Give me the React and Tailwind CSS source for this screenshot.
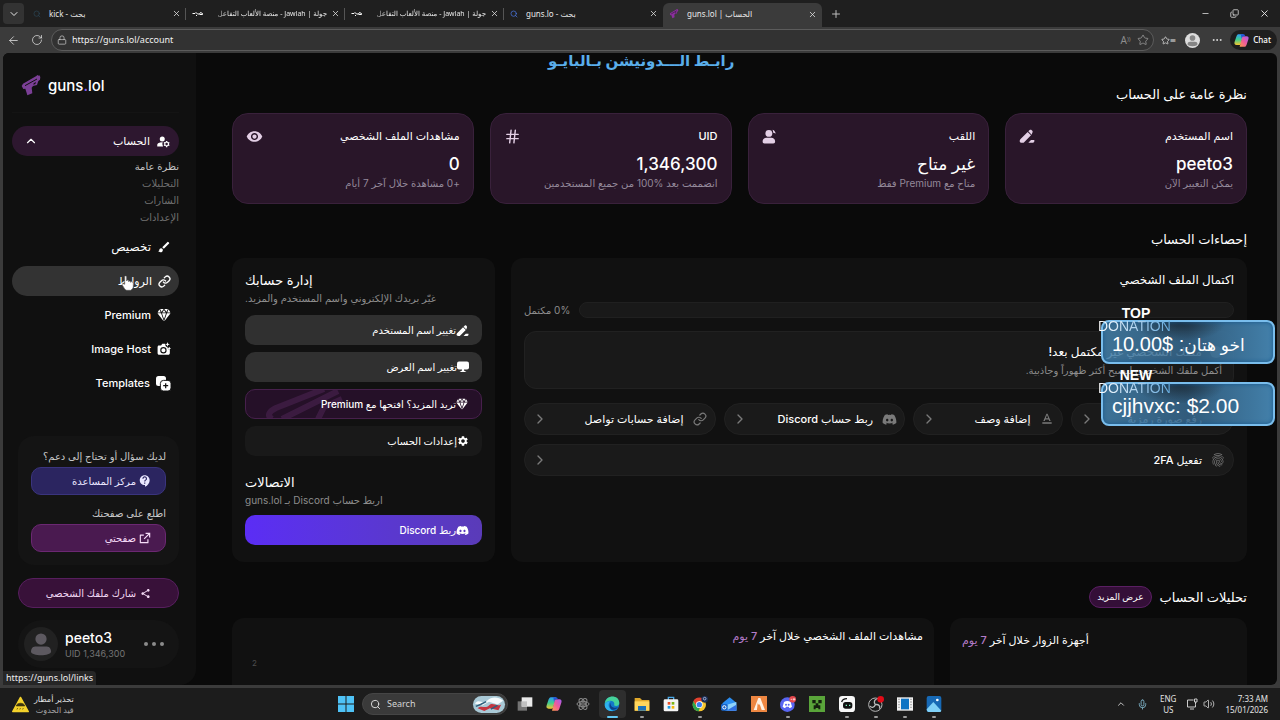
import {
  ArrowLeft,
  ChevronDown,
  ChevronRight,
  ChevronUp,
  Copy,
  Ellipsis,
  Hash,
  Link,
  Lock,
  Mic,
  Minus,
  Plus,
  RotateCw,
  Search,
  Star,
  Volume2,
  X
} from "lucide-react";
import {
  MdBrush,
  MdContactSupport,
  MdFingerprint,
  MdManageAccounts,
  MdSettings,
  MdShare,
  MdTextFormat,
  MdVisibility
} from "react-icons/md";
import { IoDiamond } from "react-icons/io5";
import { RiExternalLinkLine } from "react-icons/ri";
import { FaDiscord } from "react-icons/fa";

const pageFont = "font-['Inter','DejaVu_Sans',sans-serif]";
const systemFont = "font-['Noto_Sans','DejaVu_Sans',sans-serif]";

function GunLogo({ className }) {
  return (
    <svg viewBox="0 0 60 66" className={className} fill="currentColor" aria-hidden="true">
      <path d="M2 33 6 26 46 3l3-3 4 2 2-1 3 5-1 8-5 4-4 12-12 3-4 5 2 17-15 6-6-20-6 1z" />
      <path d="M12 32 48 12" stroke="#101010" strokeWidth="3" />
      <path d="m38 25 7-4-2 6-6 2z" fill="#101010" />
    </svg>
  );
}

function JawlahIcon() {
  return (
    <svg viewBox="0 0 22 10" className="h-[5px] w-[11px] shrink-0" fill="none" stroke="#ffffff" strokeWidth="2" aria-hidden="true">
      <path d="M1 5h5l2-2 3 3h4l2-3 4 2v2h-6M8 9h2" />
    </svg>
  );
}

function PencilLine({ size = 13 }) {
  return (
    <svg viewBox="0 0 24 24" width={size} height={size} fill="currentColor" aria-hidden="true">
      <path d="M2 17 13 6l5 5L7 22H4c-2 0-3-1-3-3zM14 5l2-2c2-2 6 2 4 4l-1 3zM14 22l4-4h5v2c0 1-1 2-2 2z" />
    </svg>
  );
}

function CameraSparkle({ size = 14 }) {
  return (
    <svg viewBox="0 0 24 24" width={size} height={size} fill="currentColor" aria-hidden="true">
      <path d="M3 6h4l2-3h5c0 3 1 5 4 6 0 3 2 4 4 4v6c0 2-1 3-3 3H4c-2 0-3-1-3-3V9c0-2 1-3 2-3z" />
      <circle cx="11" cy="14" r="4.500" fill="none" stroke="#101010" strokeWidth="2" />
      <path d="m18 0 1 3 3 1-3 1-1 3-1-3-3-1 3-1zM21 8l1 2 2 1-2 1-1 2-1-2-2-1 2-1z" />
    </svg>
  );
}

function TemplatesIcon({ size = 15 }) {
  return (
    <svg viewBox="0 0 24 24" width={size} height={size} aria-hidden="true">
      <rect x="0" y="0" width="16" height="16" rx="4" fill="currentColor" />
      <rect x="7" y="7" width="17" height="17" rx="5" fill="currentColor" stroke="#101010" strokeWidth="1.500" />
      <path d="M15.500 11.500v8M11.500 15.500h8" stroke="#101010" strokeWidth="2" />
    </svg>
  );
}

function AliasIcon({ size = 16 }) {
  return (
    <svg viewBox="0 0 24 24" width={size} height={size} fill="currentColor" aria-hidden="true">
      <circle cx="11" cy="7" r="5.500" />
      <path d="M1 20c0-4 3-6 6-6h8c3 0 6 2 6 6 0 2-1 3-3 3H4c-2 0-3-1-3-3zM17 1c3 1 4 3 5 6l-4-1z" />
    </svg>
  );
}

function MonitorIcon({ size = 12 }) {
  return (
    <svg viewBox="0 0 24 24" width={size} height={size} fill="currentColor" aria-hidden="true">
      <rect x="0" y="1" width="24" height="16" rx="4" />
      <path d="M10 16h4v3l5 3H5l5-3z" />
    </svg>
  );
}

function Avatar({ className }) {
  return (
    <svg viewBox="0 0 24 24" className={className} fill="currentColor" aria-hidden="true">
      <circle cx="12" cy="8" r="4.500" />
      <path d="M4 18c0-3 2-4 4-4h8c2 0 4 1 4 4 0 2-4 3-8 3s-8-1-8-3z" />
    </svg>
  );
}

function CopilotIcon({ size = 16 }) {
  return (
    <svg viewBox="0 0 24 24" width={size} height={size} className="shrink-0" aria-hidden="true">
      <defs>
        <linearGradient id="copilotA" x1="0" y1="0" x2="0" y2="1">
          <stop offset="0" stopColor="#2f9df4" />
          <stop offset="0.500" stopColor="#3fce8e" />
          <stop offset="1" stopColor="#f3c530" />
        </linearGradient>
        <linearGradient id="copilotB" x1="1" y1="0" x2="0" y2="1">
          <stop offset="0" stopColor="#a05cf5" />
          <stop offset="0.500" stopColor="#ee5a9c" />
          <stop offset="1" stopColor="#ff9a4a" />
        </linearGradient>
      </defs>
      <path d="M7 2h8l-4 15c0 1-1 2-3 2H4c-3 0-4-2-3-5l3-9c1-2 2-3 3-3z" fill="url(#copilotA)" />
      <path d="M17 22H9l4-15c0-1 1-2 3-2h4c3 0 4 2 3 5l-3 9c-1 2-2 3-3 3z" fill="url(#copilotB)" />
      <path d="M11 2h4c2 0 2 1 3 3h-3c-2 0-2 2-3 4z" fill="#2456d8" />
    </svg>
  );
}

const tabs = [
  { title: "kick - بحث", icon: "search", dim: true },
  { title: "جولة | Jawlah - منصة الألعاب التفاعل", icon: "jawlah", rtl: true },
  { title: "جولة | Jawlah - منصة الألعاب التفاعل", icon: "jawlah", rtl: true },
  { title: "guns.lo - بحث", icon: "search" },
  { title: "guns.lol | الحساب", icon: "gun", active: true }
];

function TabIcon({ tab }) {
  if (tab.icon === "gun") return <GunLogo className="h-[10px] w-[10px] shrink-0 text-[#8b2f9e]" />;
  if (tab.icon === "jawlah") return <JawlahIcon />;
  return <Search size={8} className={tab.dim ? "shrink-0 text-[#2b4757]" : "shrink-0 text-[#4d7bf0]"} />;
}

function TabStrip() {
  return (
    <div className="flex h-[27px] shrink-0 items-center bg-[#1f1f1f] pl-[3px] text-[#e8e8e8]">
      <button className="grid h-[21px] w-[21px] shrink-0 place-items-center rounded bg-[#333333]" aria-label="Tab actions">
        <ChevronDown size={12} />
      </button>
      <div className="flex h-full min-w-0 items-end pl-[3px]" role="tablist">
        {tabs.map((tab, i) => (
          <div
            key={i}
            role="tab"
            aria-selected={!!tab.active}
            className={`flex w-[159px] items-center pr-[5px] pl-[6px] ${
              tab.active ? "h-6 rounded-t-md bg-[#3b3b3b] pb-[2px]" : "h-[27px]"
            }`}
          >
            <TabIcon tab={tab} />
            <span
              dir={tab.rtl ? "rtl" : "ltr"}
              className={`min-w-0 flex-1 leading-4 whitespace-nowrap ${
                tab.rtl
                  ? "mr-1 ml-[5px] text-[7px] [mask-image:linear-gradient(to_right,transparent,black_20px)]"
                  : "mx-2 text-[8px]"
              }`}
            >
              {tab.title}
            </span>
            <button aria-label="Close tab">
              <X size={9} />
            </button>
            {i < 3 && <span className="-mr-[5px] ml-1 h-3 w-px bg-[#555555]" />}
          </div>
        ))}
      </div>
      <button className="ml-2 text-[#bdbdbd]" aria-label="New tab">
        <Plus size={12} />
      </button>
      <div className="ml-auto flex items-center gap-[20px] pr-[10px]">
        <button aria-label="Minimize"><Minus size={9} /></button>
        <button aria-label="Restore"><Copy size={9} className="-scale-x-100 rotate-180" /></button>
        <button aria-label="Close"><X size={11} /></button>
      </div>
    </div>
  );
}

function Toolbar() {
  return (
    <div className="flex h-[26px] shrink-0 items-center bg-[#3b3b3b] pr-[3px] pl-[7px] text-[#dddddd]">
      <button aria-label="Back"><ArrowLeft size={13} strokeWidth={1.5} /></button>
      <button aria-label="Refresh" className="ml-[11px]"><RotateCw size={12} strokeWidth={1.5} /></button>
      <div className="ml-2 flex h-[22px] min-w-0 flex-1 items-center gap-[5px] rounded-full border border-[#5c5c5c] bg-[#323232] pr-1 pl-[5px]">
        <Lock size={10} strokeWidth={1.5} />
        <input
          aria-label="Address"
          defaultValue="https://guns.lol/account"
          className="min-w-0 flex-1 bg-transparent text-[9px] leading-4 text-[#f0f0f0] outline-none"
        />
        <span className="text-[10px] text-[#8d8d8d]">A<sup className="text-[6px]">))</sup></span>
        <Star size={12} strokeWidth={1.5} className="ml-px text-[#a0a0a0]" />
      </div>
      <button aria-label="Favorites" className="ml-[7px] flex items-center">
        <Star size={9} />
        <span className="text-[8px] leading-3">≡</span>
      </button>
      <button aria-label="Profile" className="ml-[9px] grid h-[15px] w-[15px] place-items-center overflow-hidden rounded-full bg-[#dcdcdc] text-[#858585]">
        <Avatar className="h-[15px] w-[15px]" />
      </button>
      <button aria-label="Settings and more" className="ml-[11px]"><Ellipsis size={12} /></button>
      <button className="ml-[7px] flex h-[20px] items-center gap-1 rounded-full bg-[#1e1e1e] pr-[6px] pl-1 text-[8px] font-medium text-white">
        <CopilotIcon size={15} />
        Chat
      </button>
    </div>
  );
}

const subItems = ["نظرة عامة", "التحليلات", "الشارات", "الإعدادات"];

const navItems = [
  { label: "تخصيص", icon: <MdBrush size={14} />, size: "text-[12px]" },
  { label: "الروابط", icon: <Link size={13} strokeWidth={2.5} />, size: "text-[11px]", hover: true },
  { label: "Premium", icon: <IoDiamond size={14} />, size: "text-[11px]" },
  { label: "Image Host", icon: <CameraSparkle size={14} />, size: "text-[11px]" },
  { label: "Templates", icon: <TemplatesIcon size={15} />, size: "text-[11px]" }
];

function Sidebar() {
  return (
    <aside dir="rtl" className="flex w-[193px] shrink-0 flex-col rounded-br-2xl bg-[#101010] pr-[17px] pl-[9px]">
      <div dir="ltr" className="flex h-[60px] items-center gap-[7px] border-b border-[#141414] pt-[6px] pl-[9px]">
        <GunLogo className="h-[22px] w-5 text-[#7b3f96]" />
        <span className="text-[15px] leading-6 font-medium text-white">guns<span className="text-[#8b5cf6]">.</span>lol</span>
      </div>
      <button className="mt-[13px] flex h-[30px] shrink-0 items-center gap-[6px] rounded-full bg-[#2d172f] px-2 text-white">
        <MdManageAccounts size={15} />
        <span className="text-[11px] font-medium">الحساب</span>
        <ChevronUp size={14} className="mr-auto ml-1" />
      </button>
      <ul className="mt-[2px]">
        {subItems.map((item, i) => (
          <li key={item} className={`h-[17px] text-[10px] leading-[17px] ${i === 0 ? "text-[#c4c4c4]" : "text-[#6f6f6f]"}`}>
            <a href="#">{item}</a>
          </li>
        ))}
      </ul>
      <nav className="mt-[6px] flex flex-col gap-1">
        {navItems.map((item) => (
          <a
            key={item.label}
            href="#"
            className={`flex h-[30px] items-center gap-[6px] rounded-full px-2 font-medium text-white ${item.size} ${
              item.hover ? "bg-[#333333]" : ""
            }`}
          >
            {item.icon}
            {item.label}
          </a>
        ))}
      </nav>

      <div className="mt-[38px] ml-[6px] rounded-2xl bg-[#141414] px-[13px] pt-3 pb-[13px]">
        <p className="text-[10px] leading-4 text-[#c9c9c9]">لديك سؤال أو تحتاج إلى دعم؟</p>
        <button className="mt-[3px] flex h-7 w-full items-center gap-[2px] rounded-[10px] border border-[#3a347e] bg-[#2b2560] px-[13px] text-[10px] text-[#e9e6ff]">
          <MdContactSupport size={14} />
          مركز المساعدة
        </button>
        <p className="mt-[10px] text-[10px] leading-4 text-[#c9c9c9]">اطلع على صفحتك</p>
        <button className="mt-[3px] flex h-7 w-full items-center gap-[2px] rounded-[10px] border border-[#6b2872] bg-[#4a1a50] px-[13px] text-[10px] text-[#f6dcf8]">
          <RiExternalLinkLine size={14} />
          صفحتي
        </button>
      </div>
      <button className="mt-[13px] ml-[6px] flex h-[30px] shrink-0 items-center justify-center gap-1 rounded-full border border-[#571f5e] bg-[#381139] text-[10px] text-[#f1d8f3]">
        <MdShare size={11} />
        شارك ملفك الشخصي
      </button>
      <div dir="ltr" className="mt-3 ml-[6px] flex h-12 shrink-0 items-center gap-[7px] rounded-full bg-[#141414] pr-[15px] pl-[6px]">
        <div className="grid h-[34px] w-[34px] place-items-center rounded-full bg-[#212121] text-[#5d5960]">
          <Avatar className="h-[30px] w-[30px]" />
        </div>
        <div className="flex-1 pt-1">
          <div className="text-[14px] leading-4 font-medium text-white">peeto3</div>
          <div className="text-[9px] leading-4 text-[#757575]">UID 1,346,300</div>
        </div>
        <button aria-label="More" className="flex gap-1">
          <span className="h-1 w-1 rounded-full bg-[#8b8b8b]" />
          <span className="h-1 w-1 rounded-full bg-[#8b8b8b]" />
          <span className="h-1 w-1 rounded-full bg-[#8b8b8b]" />
        </button>
      </div>
    </aside>
  );
}

const stats = [
  { title: "اسم المستخدم", value: "peeto3", note: "يمكن التغيير الآن", icon: <PencilLine size={16} /> },
  { title: "اللقب", value: "غير متاح", note: "متاح مع Premium فقط", icon: <AliasIcon size={15} /> },
  { title: "UID", value: "1,346,300", note: "انضممت بعد %100 من جميع المستخدمين", icon: <Hash size={17} strokeWidth={2} /> },
  { title: "مشاهدات الملف الشخصي", value: "0", note: "+0 مشاهدة خلال آخر 7 أيام", icon: <MdVisibility size={17} /> }
];

function StatCard({ stat }) {
  return (
    <div className="rounded-2xl border border-[#39213b] bg-[#291629] px-[13px] py-3">
      <div className="flex h-5 items-center justify-between">
        <h3 className="text-[11px] font-medium text-white">{stat.title}</h3>
        <span className="text-[#e3cfe5]">{stat.icon}</span>
      </div>
      <p className="mt-[6px] text-[17px] leading-6 font-medium text-white">{stat.value}</p>
      <p className="mb-px text-[10px] leading-[14px] text-[#94899a]">{stat.note}</p>
    </div>
  );
}

const steps = [
  { label: "رفع صورة رمزية", icon: null, width: "basis-[163px]" },
  { label: "إضافة وصف", icon: <MdTextFormat size={16} />, width: "basis-[149px]" },
  { label: "ربط حساب Discord", icon: <FaDiscord size={15} />, width: "basis-[181px]" },
  { label: "إضافة حسابات تواصل", icon: <Link size={14} />, width: "basis-[191px]" }
];

function Step({ label, icon, className }) {
  return (
    <button className={`flex h-8 items-center gap-2 rounded-full border border-[#212121] bg-[#1a1a1a] px-[7px] text-[#7a7a7a] ${className}`}>
      <span className="grid w-4 place-items-center">{icon}</span>
      <span className="text-[11px] font-medium whitespace-nowrap text-white">{label}</span>
      <ChevronRight size={16} className="mr-auto" />
    </button>
  );
}

function Completion() {
  return (
    <section className="min-w-0 flex-1 rounded-xl bg-[#111111] px-[13px] pt-3">
      <h3 className="text-[12px] leading-5 font-medium text-white">اكتمال الملف الشخصي</h3>
      <div className="mt-3 flex items-center gap-[9px]">
        <div className="h-4 flex-1 rounded-full border border-[#202020] bg-[#191919]" />
        <span className="text-[10px] leading-4 whitespace-nowrap text-[#8d8d8d]">0% مكتمل</span>
      </div>
      <div className="mt-[13px] h-[58px] rounded-xl border border-[#212121] bg-[#191919] px-[11px] pt-[11px]">
        <h4 className="flex items-center gap-2 text-[12px] leading-[18px] font-medium text-white">
          <span className="h-3 w-3 rounded-full bg-[#777777]" />
          ملفك الشخصي غير مكتمل بعد!
        </h4>
        <p className="text-[10px] leading-[18px] text-[#8d8d8d]">أكمل ملفك الشخصي ليصبح أكثر ظهوراً وجاذبية.</p>
      </div>
      <div className="mt-[14px] flex gap-2">
        {steps.map((step) => (
          <Step key={step.label} label={step.label} icon={step.icon} className={`grow ${step.width}`} />
        ))}
      </div>
      <Step label="تفعيل 2FA" icon={<MdFingerprint size={16} />} className="mt-[9px] w-full" />
    </section>
  );
}

const actionBase = "relative flex h-[30px] w-full items-center overflow-hidden rounded-[10px] px-[13px] text-[10px] font-medium text-white";

function Management() {
  return (
    <section className="w-[263px] shrink-0 rounded-xl bg-[#111111] px-[13px] pt-3 pb-[17px]">
      <h3 dir="ltr" className="text-[13px] leading-5 font-medium text-white">إدارة حسابك</h3>
      <p className="text-left text-[10px] leading-4 text-[#8d8d8d]">غيّر بريدك الإلكتروني واسم المستخدم والمزيد.</p>
      <div className="mt-[9px] flex flex-col gap-[7px]">
        <button className={`${actionBase} bg-[#303030]`}><PencilLine size={13} />تغيير اسم المستخدم</button>
        <button className={`${actionBase} bg-[#303030]`}><MonitorIcon size={12} />تغيير اسم العرض</button>
        <button className={`${actionBase} border border-[#47204c] bg-[#251028]`}>
          <svg viewBox="0 0 90 30" className="absolute left-5 h-[30px] w-[90px] text-[#3b1b40]" fill="none" stroke="currentColor" aria-hidden="true">
            <path d="M6 30c-6-4-2-8 4-11L58 0M16 30 72 2M52 30l6-12 18-8" strokeWidth="6" />
          </svg>
          <IoDiamond size={12} className="relative" />
          <span className="relative">تريد المزيد؟ افتحها مع Premium</span>
        </button>
        <button className={`${actionBase} bg-[#191919]`}><MdSettings size={12} />إعدادات الحساب</button>
      </div>
      <h3 dir="ltr" className="mt-4 text-[13px] leading-5 font-medium text-white">الاتصالات</h3>
      <p className="text-left text-[10px] leading-4 text-[#8d8d8d]">اربط حساب Discord بـ guns.lol</p>
      <button className={`${actionBase} mt-[7px] bg-linear-to-r from-[#5b2df5] to-[#5a3bb8]`}><FaDiscord size={13} />ربط Discord</button>
    </section>
  );
}

function Dashboard() {
  return (
    <main dir="rtl" className="min-w-0 flex-1 pt-[31px] pr-[30px] pl-9">
      <h2 className="text-[13px] leading-5 font-medium text-white">نظرة عامة على الحساب</h2>
      <div className="mt-[9px] grid grid-cols-4 gap-4">
        {stats.map((stat) => <StatCard key={stat.title} stat={stat} />)}
      </div>
      <h2 className="mt-[25px] text-[13px] leading-5 font-medium text-white">إحصاءات الحساب</h2>
      <div className="mt-[9px] flex gap-4">
        <Completion />
        <Management />
      </div>
      <div className="mt-6 flex h-[22px] items-center gap-2">
        <h2 className="text-[13px] leading-5 font-medium text-white">تحليلات الحساب</h2>
        <button className="h-[22px] rounded-full border border-[#5a1f63] bg-[#340f38] px-[7px] text-[9px] font-medium text-white">عرض المزيد</button>
      </div>
      <div className="mt-[10px] flex gap-4">
        <section className="w-[297px] shrink-0 rounded-t-xl bg-[#111111] pt-3 pl-3 text-left">
          <h3 className="text-[11px] leading-5 font-medium text-white">
            أجهزة الزوار خلال آخر <span className="text-[#b57cc9]">7 يوم</span>
          </h3>
        </section>
        <section className="h-[120px] flex-1 rounded-t-xl bg-[#111111] px-[11px] pt-2">
          <h3 className="text-[11px] leading-5 font-medium text-white">
            مشاهدات الملف الشخصي خلال آخر <span className="text-[#b57cc9]">7 يوم</span>
          </h3>
          <p className="mt-[9px] pl-[9px] text-left text-[8px] leading-4 text-[#4d4d4d]">2</p>
        </section>
      </div>
    </main>
  );
}

function Donation({ title, className, children }) {
  return (
    <div className={`absolute w-[175px] font-['Liberation_Sans','DejaVu_Sans',sans-serif] ${className}`}>
      <div className="w-[72px] text-center text-[14px] leading-[14px] font-bold text-white">{title}</div>
      <div className="ml-px flex h-[44px] items-center rounded-lg border-2 border-[#79bdec] bg-[radial-gradient(ellipse_at_45%_0%,#18222bcc,transparent_35%),linear-gradient(to_right,#4380aadd,#35658add_50%,#4380aa)] pt-1 pl-[9px] whitespace-nowrap text-white shadow-[inset_0_0_4px_#17598f]">
        {children}
      </div>
      <div className="absolute top-[13px] -left-[2px] bg-linear-to-r from-white to-[#62a9dd] bg-clip-text text-[14px] leading-[14px] text-transparent">
        DONATION
      </div>
    </div>
  );
}

function HandCursor() {
  return (
    <svg viewBox="0 0 24 24" className="absolute top-[222px] left-[120px] h-4 w-4" fill="#ffffff" stroke="#555555" aria-hidden="true">
      <path d="M7 2c1-1 3-1 3 1v6c0-2 3-2 3 0v1c1-2 3-1 3 1 1-2 3-1 4 1v5c0 3-2 5-4 6h-6c-3-1-4-4-6-7-2-2 0-4 3-2z" />
    </svg>
  );
}

const apps = [
  {
    name: "Task view",
    art: <><rect x="1" y="8" width="14" height="14" fill="#747474" /><rect x="7" y="2" width="16" height="14" fill="#e9e9e9" /><rect x="7" y="8" width="8" height="8" fill="#c0c0c0" /></>
  },
  { name: "Copilot", copilot: true },
  {
    name: "Atom",
    art: <g fill="none" stroke="#888888" strokeWidth="1.500"><ellipse cx="12" cy="12" rx="9" ry="4" /><ellipse cx="12" cy="12" rx="9" ry="4" transform="rotate(60 12 12)" /><ellipse cx="12" cy="12" rx="9" ry="4" transform="rotate(120 12 12)" /><circle cx="12" cy="12" r="2" /></g>
  },
  {
    name: "Edge",
    active: true,
    art: <><circle cx="12" cy="12" r="11" fill="#1379c9" /><path d="M1 12C2-2 22-3 23 10c0 5-5 6-8 4 2-5-2-7-5-7-4 0-8 2-9 5z" fill="#45d39b" /><path d="M10 8c-5 3-4 12 4 14-7 2-13-3-13-9 1-4 5-6 9-5z" fill="#2fb2ee" /><path d="M10 10c-1 5 3 9 11 7-3 4-8 5-11 2-2-3-2-7 0-9z" fill="#0c3f88" /></>
  },
  {
    name: "File Explorer",
    running: true,
    art: <><path d="M1 3h8l3 3h11v16H1z" fill="#e0a82a" /><path d="M1 8h22v14H1z" fill="#ffd65c" /><path d="M6 15h12v7H6z" fill="#1d72b8" /></>
  },
  {
    name: "Store",
    art: <><path d="M8 6V2h8v4" fill="none" stroke="#4aa8e8" strokeWidth="2" /><rect x="1" y="5" width="22" height="18" rx="2" fill="#f4f4f4" /><path d="M7 9h4v4H7z" fill="#e8532b" /><path d="M13 9h4v4h-4z" fill="#7cb518" /><path d="M7 15h4v4H7z" fill="#1f9ce4" /><path d="M13 15h4v4h-4z" fill="#f5b50a" /></>
  },
  {
    name: "Chrome",
    running: true,
    art: <><circle cx="11" cy="13" r="10" fill="#f7c52d" /><path d="M2 8a10 10 0 0 1 18 0h-9l-4 7z" fill="#e2402f" /><path d="M2 8l5 8 5 1-2 6C2 22-1 14 2 8z" fill="#2da44e" /><circle cx="11" cy="13" r="5" fill="#ffffff" /><circle cx="11" cy="13" r="4" fill="#3a7df0" /><circle cx="19" cy="5" r="5" fill="#1c2f57" /><circle cx="19" cy="4" r="2" fill="none" stroke="#d9e4ff" /></>
  },
  {
    name: "Outlook",
    art: <><path d="M2 11 13 2l10 8v12H6z" fill="#2b8df0" /><path d="m6 14 17-5v13H8z" fill="#8ed3fb" /><path d="m8 22 15-9v9z" fill="#2f6ee0" /><rect x="0" y="12" width="10" height="10" rx="2" fill="#1764c8" /><circle cx="5" cy="17" r="2.500" fill="none" stroke="#ffffff" strokeWidth="1.500" /></>
  },
  {
    name: "FiveM",
    art: <><rect width="24" height="24" fill="#ee8742" /><path d="M11 3h3l7 18h-5l-3-9-4 9H4z" fill="#fff2e4" /><path d="m10 11 3 4-2 6H9z" fill="#ee8742" /></>
  },
  {
    name: "Discord",
    running: true,
    art: <><circle cx="11" cy="13" r="11" fill="#5865f2" /><path d="M6 9c3-2 7-2 10 0l2 7c-2 2-4 2-4 2l-1-2H9l-1 2s-2 0-4-2z" fill="#ffffff" /><circle cx="9" cy="13" r="1.500" fill="#5865f2" /><circle cx="13" cy="13" r="1.500" fill="#5865f2" /><circle cx="19" cy="5" r="5" fill="#e5484d" /><path d="M16 5h2m1 0h4m-2-2v4" stroke="#ffffff" /></>
  },
  {
    name: "Minecraft",
    art: <><rect width="24" height="24" fill="#5aa53a" /><path d="M5 6h5v5H5zM14 6h5v5h-5zM10 11h4v3h3v6h-3v-2h-4v2H7v-6h3z" fill="#14210e" /></>
  },
  {
    name: "Kick Bot",
    running: true,
    art: <><rect width="24" height="24" rx="5" fill="#f7f7f7" /><rect x="6" y="9" width="14" height="10" rx="4" fill="#111111" /><path d="M4 9c1-4 4-5 8-5" fill="none" stroke="#111111" strokeWidth="2" /><path d="M10 14h2M15 14h2" stroke="#7ff5c1" strokeWidth="2" /></>
  },
  {
    name: "OBS",
    running: true,
    art: <><circle cx="11" cy="13" r="10" fill="#1a1a1a" stroke="#b9b9b9" strokeWidth="1.500" /><path d="M11 13c-3-4-1-8 2-8M11 13c5-1 8 2 6 6M11 13c-2 5-6 5-8 2" fill="none" stroke="#b9b9b9" strokeWidth="2" /><circle cx="19" cy="5" r="5" fill="#e30b17" /></>
  },
  {
    name: "Movies",
    running: true,
    art: <><rect x="0" y="2" width="24" height="20" fill="#f2f2f2" /><rect x="6" y="4" width="12" height="16" fill="#0f74c4" /><path d="M3 4v16M21 4v16" stroke="#9a9a9a" strokeWidth="2" strokeDasharray="2 2" /></>
  },
  {
    name: "Photos",
    running: true,
    art: <><rect x="1" y="0" width="22" height="24" rx="3" fill="#1769b5" /><path d="M1 20 11 9l12 13c-1 2-2 2-3 2H4c-2 0-3-2-3-4z" fill="#7fd0f7" /><circle cx="17" cy="6" r="2" fill="#ffffff" /></>
  }
];

function Taskbar() {
  return (
    <footer className={`flex h-8 shrink-0 items-center bg-[#1c1c1c] text-[#e4e4e4] ${systemFont}`}>
      <div className="flex flex-1 items-center gap-[5px] pl-3">
        <svg viewBox="0 0 24 24" width="17" height="17" aria-hidden="true">
          <path d="M12 2 23 22H1z" fill="#f4d22b" stroke="#f4d22b" strokeWidth="2" strokeLinejoin="round" />
          <path d="M6 14c1-5 11-5 12 0zM8 17l-1 2M12 17l-1 2M16 17l-1 2" fill="#3c3410" stroke="#3c3410" />
        </svg>
        <div dir="rtl" className="text-[8px] leading-[11px]">
          <div>تحذير أمطار</div>
          <div className="text-[#a8a8a8]">قيد الحدوث</div>
        </div>
      </div>
      <div className="flex h-full items-center pl-[6px]">
        <button aria-label="Start" className="mr-2">
          <svg viewBox="0 0 16 16" width="16" height="16" fill="#4fc3f7" aria-hidden="true">
            <path d="M0 0h7.500v7.500H0zM8.500 0H16v7.500H8.500zM0 8.500h7.500V16H0zM8.500 8.500H16V16H8.500z" />
          </svg>
        </button>
        <label className="mr-[3px] flex h-[22px] w-[146px] items-center gap-[6px] rounded-full border border-[#454545] bg-[#3a3a3a] pl-[7px]">
          <Search size={11} />
          <input placeholder="Search" aria-label="Search" className="w-0 flex-1 bg-transparent text-[9px] leading-4 outline-none placeholder:text-[#d4d4d4]" />
          <svg viewBox="0 0 34 18" width="34" height="17" className="mr-px" aria-hidden="true">
            <rect width="34" height="18" rx="9" fill="#a9c9d6" />
            <path d="M2 8c5-6 8 2 13-3s12-4 17 0l-6 4-9-3-7 4z" fill="#f5fafc" />
            <path d="M5 13c4-4 8 1 12-3s8 2 13-1l-3 6-9-2-6 3z" fill="#c53540" />
            <path d="m8 9 6-3m5 8 7-4M3 11l5-2" stroke="#2d5f7c" strokeWidth="1.500" />
          </svg>
        </label>
        <div className="flex w-[437px] justify-between">
          {apps.map((app) => (
            <button
              key={app.name}
              aria-label={app.name}
              className={`relative grid h-7 w-[27px] place-items-center rounded ${app.active ? "bg-[#2e2e2e]" : ""}`}
            >
              {app.copilot ? (
                <CopilotIcon size={16} />
              ) : (
                <svg viewBox="0 0 24 24" width="16" height="16" aria-hidden="true">{app.art}</svg>
              )}
              {app.active && <span className="absolute bottom-0 h-[2px] w-[11px] rounded-full bg-[#62c8f5]" />}
              {app.running && <span className="absolute bottom-0 h-[2px] w-1 rounded-full bg-[#9b9b9b]" />}
            </button>
          ))}
        </div>
      </div>
      <div className="flex flex-1 items-center justify-end pr-3">
        <ChevronUp size={10} />
        <Mic size={11} className="ml-[11px] text-[#7fb3c8]" />
        <div className="ml-[12px] text-center text-[8px] leading-[11px]">ENG<br />US</div>
        <svg viewBox="0 0 24 24" width="12" height="12" fill="none" stroke="#cccccc" strokeWidth="2" className="ml-[10px]" aria-hidden="true">
          <path d="M15 4H3v14h16v-5M8 22h8M17 2h5v6h-5zM19 8v5" />
        </svg>
        <Volume2 size={12} strokeWidth={1.5} className="ml-[5px]" />
        <div className="ml-[10px] text-right text-[8px] leading-[11px]">7:33 AM<br />15/01/2026</div>
      </div>
    </footer>
  );
}

export default function App() {
  return (
    <div className={`flex h-screen flex-col overflow-hidden bg-[#3b3b3b] ${pageFont}`}>
      <div className={systemFont}>
        <TabStrip />
        <Toolbar />
      </div>
      <div className="relative min-h-0 flex-1 px-[3px] pb-[3px]">
        <div className="flex h-full overflow-hidden rounded-md bg-[#0a0a0a]">
          <Sidebar />
          <Dashboard />
        </div>
        <HandCursor />
        <div dir="rtl" className="absolute -top-1 left-[548px] text-[15px] leading-6 font-bold whitespace-nowrap text-[#5aaeea]">
          رابـط الـــدونيشن بـالبايـو
        </div>
        <Donation title="TOP" className="top-[253px] right-[5px]">
          <p dir="rtl" className="text-[20px]"><span className="text-[17px]">اخو هتان</span>: $10.00</p>
        </Donation>
        <Donation title="NEW" className="top-[315px] right-[5px]">
          <p className="text-[21px]">cjjhvxc: $2.00</p>
        </Donation>
        <div className={`absolute bottom-[3px] left-[3px] rounded-tr bg-[#262626] px-[3px] text-[9px] leading-[14px] text-[#eeeeee] ${systemFont}`}>
          https://guns.lol/links
        </div>
      </div>
      <Taskbar />
    </div>
  );
}
